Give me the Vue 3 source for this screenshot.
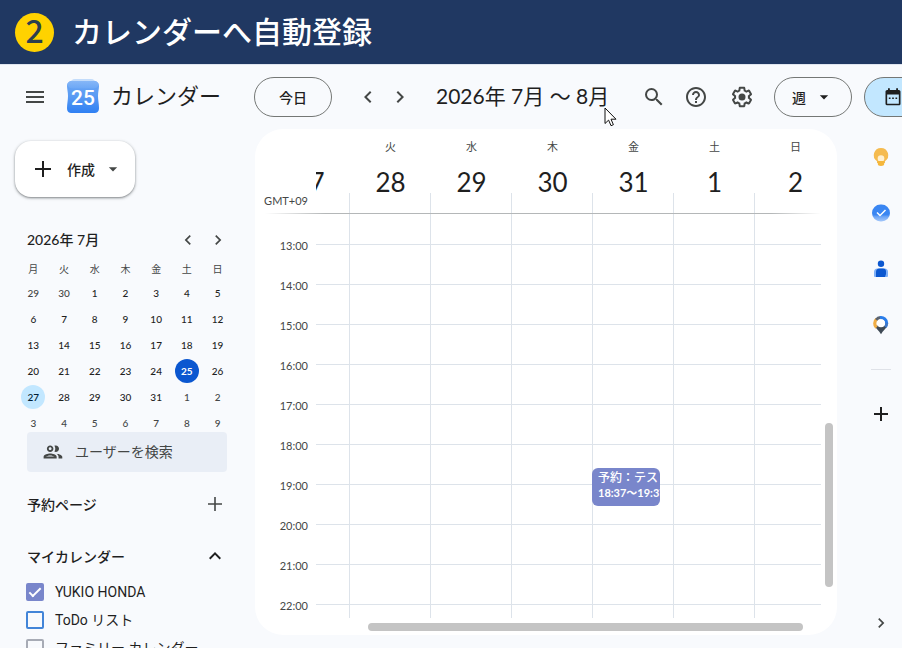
<script setup>
import { ref, computed } from 'vue'

const weekdays = ['月', '火', '水', '木', '金', '土', '日']
const days = [27, 28, 29, 30, 31, 1, 2].map((date, i) => ({ date, name: weekdays[i] }))
const hours = [13, 14, 15, 16, 17, 18, 19, 20, 21, 22]

const monthDates = [29, 30, ...Array.from({ length: 31 }, (_, i) => i + 1), 1, 2, 3, 4, 5, 6, 7, 8, 9]
const weeks = computed(() => {
  const cells = monthDates.map((date, i) => ({
    date,
    outside: i < 2 || i > 32,
    today: i === 26,
    selected: i === 28,
  }))
  return Array.from({ length: 6 }, (_, w) => cells.slice(w * 7, w * 7 + 7))
})

const calendars = ref([
  { id: 'own', name: 'YUKIO HONDA', tone: 'violet', on: true },
  { id: 'todo', name: 'ToDo リスト', tone: 'blue', on: false },
  { id: 'family', name: 'ファミリー カレンダー', tone: 'grey', on: false },
])

const HOUR_HEIGHT = 40
const FIRST_LINE = 30
const events = [
  { day: 4, title: '予約：テスト', time: '18:37～19:37', start: 18 + 37 / 60, length: 57 / 60 },
]
const eventStyle = (e) => ({
  top: Math.floor(FIRST_LINE + (e.start - hours[0]) * HOUR_HEIGHT) + 'px',
  height: Math.round(e.length * HOUR_HEIGHT) + 'px',
})
const eventsOn = (day) => events.filter((e) => e.day === day)
const view = ref('週')
</script>

<template>
  <div class="page">
    <div class="banner">
      <span class="badge">2</span>
      <h1>カレンダーへ自動登録</h1>
    </div>

    <header class="topbar">
      <button class="icon-btn menu" aria-label="メインメニュー">
        <svg class="i24" viewBox="0 0 24 24"><path d="M3 18h18v-2H3v2zm0-5h18v-2H3v2zm0-7v2h18V6H3z" /></svg>
      </button>
      <svg class="logo" viewBox="0 0 32 34" aria-hidden="true">
        <defs>
          <linearGradient id="lg" x1="0" y1="0" x2="0" y2="1">
            <stop offset="0" stop-color="#6ba6f5" />
            <stop offset="0.45" stop-color="#5b9cf3" />
            <stop offset="1" stop-color="#2f80f3" />
          </linearGradient>
          <linearGradient id="lt" x1="0" y1="0" x2="0" y2="1">
            <stop offset="0" stop-color="#8fbcf8" />
            <stop offset="1" stop-color="#6ea9f6" />
          </linearGradient>
        </defs>
        <rect x="3" y="0" width="26" height="14" rx="5" fill="#c3dcfb" />
        <path d="M5 2h22c3 0 5 2 5 5 0 3-1 6-1 10s1 8 1 12-2 5-5 5H5c-3 0-5-1-5-5s1-8 1-12-1-7-1-10c0-3 2-5 5-5z" fill="url(#lg)" />
        <path d="M5 2h22c2.500 0 4.500 1.500 4.800 4-1.300 2.500-3.300 3.500-5.800 3.500H6C3.500 9.500 1.500 8.500.2 6 .5 3.500 2.500 2 5 2z" fill="url(#lt)" opacity=".75" />
        <text x="16" y="26" text-anchor="middle" class="logo-num">25</text>
      </svg>
      <span class="product">カレンダー</span>
      <button class="pill today">今日</button>
      <div class="pager">
        <button class="icon-btn" aria-label="前の週">
          <svg class="i24" viewBox="0 0 24 24"><path d="M15.410 7.410 14 6l-6 6 6 6 1.410-1.410L10.830 12z" /></svg>
        </button>
        <button class="icon-btn" aria-label="次の週">
          <svg class="i24" viewBox="0 0 24 24"><path d="M10 6 8.590 7.410 13.170 12l-4.580 4.590L10 18l6-6z" /></svg>
        </button>
      </div>
      <h2 class="range">2026年 7月 〜 8月</h2>
      <div class="tools">
        <button class="icon-btn" aria-label="検索">
          <svg class="i24" viewBox="0 0 24 24"><path d="M15.500 14h-.79l-.28-.27A6.471 6.471 0 0 0 16 9.500 6.500 6.500 0 1 0 9.500 16c1.610 0 3.090-.59 4.230-1.570l.27.28v.79l5 4.990L20.490 19l-4.990-5zm-6 0C7.010 14 5 11.990 5 9.500S7.010 5 9.500 5 14 7.010 14 9.500 11.990 14 9.500 14z" /></svg>
        </button>
        <button class="icon-btn" aria-label="ヘルプ">
          <svg class="i24" viewBox="0 0 24 24"><path d="M11 18h2v-2h-2v2zm1-16C6.480 2 2 6.480 2 12s4.480 10 10 10 10-4.480 10-10S17.520 2 12 2zm0 18c-4.410 0-8-3.590-8-8s3.590-8 8-8 8 3.590 8 8-3.590 8-8 8zm0-14c-2.210 0-4 1.790-4 4h2c0-1.100.9-2 2-2s2 .9 2 2c0 2-3 1.750-3 5h2c0-2.250 3-2.500 3-5 0-2.210-1.790-4-4-4z" /></svg>
        </button>
        <button class="icon-btn gear" aria-label="設定">
          <svg class="i24" viewBox="0 0 24 24"><path d="M13.850 22.250h-3.700c-.74 0-1.360-.54-1.450-1.270l-.27-1.890c-.27-.14-.53-.29-.79-.46l-1.800.72c-.7.26-1.470-.03-1.810-.65L2.200 15.530c-.35-.66-.2-1.440.36-1.880l1.530-1.190c-.01-.15-.02-.3-.02-.46 0-.15.01-.31.02-.46l-1.520-1.190c-.59-.45-.74-1.260-.37-1.880l1.850-3.190c.34-.62 1.110-.9 1.790-.63l1.810.73c.26-.17.52-.32.78-.46l.27-1.910c.09-.7.71-1.250 1.440-1.250h3.700c.74 0 1.360.54 1.450 1.270l.27 1.890c.27.14.53.29.79.46l1.800-.72c.71-.26 1.480.03 1.820.65l1.840 3.180c.36.66.2 1.440-.36 1.880l-1.520 1.190c.01.15.02.3.02.46s-.01.31-.02.46l1.520 1.190c.56.45.72 1.230.37 1.860l-1.860 3.220c-.34.62-1.110.9-1.800.63l-1.800-.72c-.26.17-.52.32-.78.46l-.27 1.910c-.1.680-.72 1.220-1.460 1.220zm-3.230-2h2.760l.37-2.550.53-.22c.44-.18.88-.44 1.340-.78l.45-.34 2.380.96 1.380-2.400-2.030-1.580.07-.56c.03-.26.06-.51.06-.78s-.03-.53-.06-.78l-.07-.56 2.030-1.580-1.390-2.400-2.390.96-.45-.35c-.42-.32-.87-.58-1.330-.77l-.52-.22-.37-2.550h-2.760l-.37 2.550-.53.210c-.44.19-.88.44-1.340.79l-.45.33-2.380-.95-1.390 2.390 2.030 1.580-.07.56a7 7 0 0 0-.06.79c0 .26.02.53.06.78l.07.56-2.030 1.580 1.380 2.400 2.390-.96.45.35c.43.33.86.58 1.330.77l.53.22z" /><circle cx="12" cy="12" r="3.500" /></svg>
        </button>
      </div>
      <button class="pill view"><span>{{ view }}</span><svg class="i20" viewBox="0 0 24 24"><path d="m7 10 5 5 5-5z" /></svg></button>
      <button class="pill mode" aria-label="カレンダーに切り替え">
        <svg class="i20" viewBox="0 0 24 24"><path d="M19 3.500h-1V1.500h-2.200v2H8.200v-2H6v2H5c-1.110 0-2 .9-2 2v14.500a2 2 0 0 0 2 2h14c1.100 0 2-.9 2-2V5.500c0-1.100-.9-2-2-2zm0 16.500H5V9h14zM7 12.500h2v2H7zm4 0h2v2h-2zm4 0h2v2h-2z" /></svg>
      </button>
    </header>

    <div class="body">
      <aside class="sidebar">
        <button class="create">
          <svg class="i24" viewBox="0 0 24 24"><path d="M11 4h2v7h7v2h-7v7h-2v-7H4v-2h7z" /></svg>
          <span>作成</span>
          <svg class="i20 dim" viewBox="0 0 24 24"><path d="m7 10 5 5 5-5z" /></svg>
        </button>

        <div class="mini-head">
          <h3>2026年 7月</h3>
          <button class="icon-btn small" aria-label="前の月">
            <svg class="i20" viewBox="0 0 24 24"><path d="M15.410 7.410 14 6l-6 6 6 6 1.410-1.410L10.830 12z" /></svg>
          </button>
          <button class="icon-btn small" aria-label="次の月">
            <svg class="i20" viewBox="0 0 24 24"><path d="M10 6 8.590 7.410 13.170 12l-4.580 4.590L10 18l6-6z" /></svg>
          </button>
        </div>
        <table class="mini">
          <thead>
            <tr><th v-for="d in weekdays" :key="d" scope="col">{{ d }}</th></tr>
          </thead>
          <tbody>
            <tr v-for="(week, w) in weeks" :key="w">
              <td v-for="(c, i) in week" :key="i">
                <button class="date" :class="{ outside: c.outside, today: c.today, selected: c.selected }">{{ c.date }}</button>
              </td>
            </tr>
          </tbody>
        </table>

        <label class="people">
          <svg class="i20" viewBox="0 0 24 24"><path d="M9 12c1.930 0 3.500-1.570 3.500-3.500S10.930 5 9 5 5.500 6.570 5.500 8.500 7.070 12 9 12zm0-5c.83 0 1.500.67 1.500 1.500S9.830 10 9 10s-1.500-.67-1.500-1.500S8.170 7 9 7zm0 6.750c-2.340 0-7 1.170-7 3.500V19h14v-1.750c0-2.330-4.660-3.500-7-3.500zM4.340 17c.84-.58 2.870-1.250 4.660-1.250s3.820.67 4.660 1.250H4.340zm11.700-3.190c1.160.84 1.960 1.960 1.960 3.440V19h4v-1.750c0-2.020-3.500-3.170-5.960-3.440zM15 12c1.930 0 3.500-1.570 3.500-3.500S16.930 5 15 5c-.54 0-1.040.13-1.500.35.63.89 1 1.980 1 3.150s-.37 2.260-1 3.150c.46.22.96.35 1.500.35z" transform="translate(-1.500 -1.500) scale(1.120)" /></svg>
          <input type="text" placeholder="ユーザーを検索" aria-label="ユーザーを検索" />
        </label>

        <div class="section">
          <h3>予約ページ</h3>
          <button class="icon-btn small" aria-label="予約ページを追加">
            <svg class="i24" viewBox="0 0 24 24"><path d="M11.200 5h1.600v6.200H19v1.600h-6.200V19h-1.600v-6.200H5v-1.600h6.200z" /></svg>
          </button>
        </div>
        <div class="section">
          <h3>マイカレンダー</h3>
          <button class="icon-btn small dark" aria-label="折りたたむ">
            <svg class="i24" viewBox="0 0 24 24"><path d="m12 8-6 6 1.410 1.410L12 10.830l4.590 4.580L18 14z" /></svg>
          </button>
        </div>
        <ul class="calendars">
          <li v-for="c in calendars" :key="c.id">
            <input :id="c.id" v-model="c.on" type="checkbox" :class="c.tone" />
            <label :for="c.id">{{ c.name }}</label>
          </li>
        </ul>
      </aside>

      <main class="card">
        <div class="head">
          <div class="zone">GMT+09</div>
          <div class="clip">
            <div class="cols">
              <div v-for="d in days" :key="d.date" class="day">
                <span class="name">{{ d.name }}</span>
                <span class="num">{{ d.date }}</span>
              </div>
            </div>
          </div>
        </div>
        <div class="rule"></div>
        <div class="grid">
          <div class="hours">
            <span v-for="h in hours" :key="h">{{ h }}:00</span>
          </div>
          <div class="clip lines">
            <div class="cols">
              <div v-for="(d, i) in days" :key="d.date" class="slot">
                <button v-for="e in eventsOn(i)" :key="e.title" class="event" :style="eventStyle(e)">
                  <span>{{ e.title }}</span>
                  <span class="time">{{ e.time }}</span>
                </button>
              </div>
            </div>
          </div>
          <div class="vbar"><i></i></div>
        </div>
        <div class="hbar"><i></i></div>
      </main>

      <nav class="rail" aria-label="サイドパネル">
        <button aria-label="Keep">
          <svg class="i20" viewBox="0 0 20 20"><path d="M10 1a7.200 7.200 0 0 0-4 13.200V16h8v-1.800A7.200 7.200 0 0 0 10 1z" fill="#f5bb4f" /><circle cx="10" cy="11.500" r="3.300" fill="#fff0cf" /><path d="M6.800 14h6.400v3c0 1.200-1 2-3.200 2s-3.200-.8-3.200-2z" fill="#f5b73c" /></svg>
        </button>
        <button aria-label="ToDo リスト">
          <svg class="i20" viewBox="0 0 20 20"><defs><linearGradient id="tk" x1="0" y1="0" x2="0" y2="1"><stop offset=".6" stop-color="#3a86f2" /><stop offset=".72" stop-color="#6ea6f6" /><stop offset="1" stop-color="#a5c8fa" /></linearGradient></defs><rect x="1" y="1.500" width="18" height="17" rx="8.500" fill="url(#tk)" /><path d="m6 9.500 3 3 5.500-5.500" fill="none" stroke="#fff" stroke-width="1.500" /></svg>
        </button>
        <button aria-label="連絡先">
          <svg class="i20" viewBox="0 0 20 20"><circle cx="10" cy="4.800" r="3.200" fill="#0b57d0" /><rect x="3" y="9.500" width="14" height="8.500" rx="3.500" fill="#7fb0f7" /><path d="M3 14h14v3a1 1 0 0 1-1 1H4a1 1 0 0 1-1-1z" fill="#7fb0f7" /><path d="M5 18v-5a3.500 3.500 0 0 1 3.500-3.500h3.500a3 3 0 0 1 3 3V15l-1 3z" fill="#0b57d0" /></svg>
        </button>
        <button aria-label="マップ">
          <svg class="i20" viewBox="0 0 20 20"><path d="M3.500 10.500C5 14 8 15.500 10 19.200c2-3.700 5-5.200 6.500-8.700z" fill="#3f4a55" /><path d="M5.500 12.500A5.700 5.700 0 0 1 5.800 4" fill="none" stroke="#f0ad45" stroke-width="3.200" /><path d="M5.200 4.800A5.700 5.700 0 0 1 9.500 2.600" fill="none" stroke="#5c6470" stroke-width="3" /><path d="M9 2.700a5.700 5.700 0 0 1 6.700 5.800" fill="none" stroke="#2b7de9" stroke-width="3.200" /><path d="M15.700 8a5.700 5.700 0 0 1-1.500 4" fill="none" stroke="#3f78c8" stroke-width="3" /><circle cx="10" cy="8.200" r="4" fill="#fff" /></svg>
        </button>
        <hr />
        <button aria-label="アドオンを取得" class="add">
          <svg class="i24" viewBox="0 0 24 24"><path d="M11 5h2v6h6v2h-6v6h-2v-6H5v-2h6z" /></svg>
        </button>
        <button class="collapse" aria-label="サイドパネルを非表示">
          <svg class="i20" viewBox="0 0 24 24"><path d="M10 6 8.590 7.410 13.170 12l-4.580 4.590L10 18l6-6z" /></svg>
        </button>
      </nav>
    </div>

    <svg class="cursor" viewBox="0 0 13 20" aria-hidden="true"><path d="M1 1v15.500l3.600-3.400 2.400 5.600 2.400-1-2.400-5.500h5z" fill="#fff" stroke="#111" stroke-width="1" /></svg>
  </div>
</template>

<style>
body {
  overflow: hidden;
}
</style>

<style scoped>
.page {
  --ink: #1f1f1f;
  --dim: #444746;
  --line: #dde3ea;
  position: relative;
  display: flex;
  flex-direction: column;
  height: 100vh;
  overflow: hidden;
  background: #f8fafd;
  color: var(--ink);
  font-family: Lato, "Noto Sans CJK JP", sans-serif;
}
.page *,
.page *::before {
  box-sizing: border-box;
}
h1, h2, h3, ul {
  margin: 0;
  padding: 0;
  font-weight: 400;
}
button {
  margin: 0;
  padding: 0;
  border: 0;
  background: none;
  color: inherit;
  font: inherit;
}
svg {
  display: block;
  flex: none;
  fill: currentColor;
}
.i24 { width: 24px; height: 24px; }
.i20 { width: 20px; height: 20px; }

.banner {
  display: flex;
  align-items: center;
  flex: none;
  gap: 18px;
  height: 65px;
  padding-left: 15px;
  border-bottom: 1px solid #dfe5ef;
  background: #203862;
  color: #fff;
}
.badge {
  display: flex;
  justify-content: center;
  width: 39px;
  height: 39px;
  border-radius: 50%;
  background: #ffd200;
  color: #2b3f4e;
  font: 500 32px/32px "Noto Sans CJK JP", sans-serif;
}
h1 {
  padding-bottom: 4px;
  font: 500 30px/44px "Noto Sans CJK JP", sans-serif;
  white-space: nowrap;
}

.topbar {
  display: flex;
  align-items: center;
  flex: none;
  height: 64px;
  padding-left: 19px;
  white-space: nowrap;
}
.icon-btn {
  display: grid;
  place-items: center;
  flex: none;
  width: 32px;
  height: 32px;
  color: var(--dim);
}
.icon-btn.small { width: 30px; }
.icon-btn.dark { color: var(--ink); }
.logo {
  width: 32px;
  height: 34px;
  margin: 0 12px 2px 16px;
}
.logo-num {
  fill: #fff;
  font: 500 21px Roboto, sans-serif;
}
.product {
  width: 143px;
  padding-bottom: 2px;
  font-size: 22px;
  line-height: 32px;
}
.pill {
  display: flex;
  align-items: center;
  justify-content: center;
  flex: none;
  width: 78px;
  height: 40px;
  border: 1px solid #747775;
  border-radius: 20px;
  font-size: 14px;
  font-weight: 500;
}
.pager {
  display: flex;
  margin: 0 20px;
}
.range {
  flex: 1;
  padding-bottom: 2px;
  font-size: 21px;
  line-height: 32px;
}
.tools {
  display: flex;
  gap: 12px;
  margin-right: 16px;
}
.tools .icon-btn:first-child { margin-right: -2px; }
.tools .gear { margin-left: 2px; }
.view {
  gap: 8px;
  margin-right: 12px;
}
.mode {
  width: 58px;
  margin-right: -20px;
  background: #c2e7ff;
}

.body {
  display: flex;
  flex: 1;
  min-height: 0;
}
.sidebar {
  flex: none;
  width: 255px;
  padding: 12px 22px 0 15px;
  overflow: hidden;
}
.create {
  display: flex;
  align-items: center;
  gap: 12px;
  height: 56px;
  padding: 0 12px 0 16px;
  border-radius: 16px;
  background: #fff;
  box-shadow: 0 1px 2px rgba(60, 64, 67, 0.5), 0 1px 3px 1px rgba(60, 64, 67, 0.15);
  font-size: 14px;
  font-weight: 500;
}
.create .dim { color: var(--dim); margin-left: -4px; }
.mini-head {
  display: flex;
  align-items: center;
  height: 32px;
  margin-top: 27px;
  padding-left: 12px;
}
.mini-head h3 {
  flex: 1;
  padding-bottom: 2px;
  font-size: 14px;
  font-weight: 500;
}
.mini {
  width: 215px;
  margin-left: 3px;
  border-collapse: collapse;
  table-layout: fixed;
  font-size: 10px;
  text-align: center;
}
.mini th {
  height: 24px;
  padding: 0;
  color: var(--dim);
  font-weight: 400;
}
.mini td {
  height: 26px;
  padding: 0;
}
.date {
  display: block;
  width: 24px;
  height: 24px;
  margin: 0 auto;
  border-radius: 50%;
  font-weight: 500;
  line-height: 24px;
}
.date.outside { color: var(--dim); }
.date.today { background: #0b57d0; color: #fff; font-weight: 700; }
.date.selected { background: #c2e7ff; color: #001d35; }
.people {
  position: relative;
  display: flex;
  align-items: center;
  gap: 12px;
  width: 200px;
  height: 40px;
  margin: -4px 0 16px 12px;
  padding-left: 16px;
  border-radius: 4px;
  background: #e9eef6;
  color: var(--dim);
}
.people input {
  width: 140px;
  padding: 0;
  border: 0;
  outline: 0;
  background: none;
  font: 14px/20px Roboto, "Noto Sans CJK JP", sans-serif;
}
.people input::placeholder { color: var(--dim); opacity: 1; }
.section {
  display: flex;
  align-items: center;
  height: 32px;
  margin-bottom: 20px;
  padding: 0 3px 0 12px;
}
.section h3 {
  flex: 1;
  font-size: 14px;
  font-weight: 500;
}
.calendars {
  margin-top: -14px;
  padding-left: 11px;
  list-style: none;
}
.calendars li {
  display: flex;
  align-items: center;
  gap: 11px;
  height: 28px;
  font: 14px/20px Roboto, "Noto Sans CJK JP", sans-serif;
  white-space: nowrap;
}
.calendars input {
  appearance: none;
  display: grid;
  place-items: center;
  flex: none;
  width: 18px;
  height: 18px;
  margin: 0;
  border: 2px solid var(--tone);
  border-radius: 2px;
}
.calendars .violet { --tone: #7986cb; }
.calendars .blue { --tone: #4285d8; }
.calendars .grey { --tone: #a7abb5; }
.calendars input:checked { background: var(--tone); }
.calendars input:checked::before {
  content: "";
  width: 12px;
  height: 6px;
  margin-top: -3px;
  border: solid #fff;
  border-width: 0 0 2px 2px;
  transform: rotate(-45deg);
}

.card {
  display: flex;
  flex-direction: column;
  flex: 1;
  min-width: 0;
  margin-bottom: 13px;
  border-radius: 28px;
  background: #fff;
  overflow: hidden;
}
.head {
  display: flex;
  flex: none;
  height: 84px;
  padding-right: 16px;
}
.zone {
  flex: none;
  width: 61px;
  padding: 64px 8px 0 0;
  color: var(--dim);
  font-size: 11px;
  line-height: 16px;
  text-align: right;
}
.clip {
  flex: 1;
  min-width: 0;
  overflow: hidden;
}
.cols {
  display: grid;
  grid-template-columns: repeat(7, 81px);
  height: 100%;
  margin-left: -48px;
}
.day {
  display: flex;
  flex-direction: column;
  align-items: center;
  padding: 10px 0 0 2px;
  background: linear-gradient(var(--line), var(--line)) left bottom / 1px 20px no-repeat;
}
.name {
  color: var(--dim);
  font-size: 11px;
  line-height: 16px;
}
.num {
  margin-top: 7px;
  font-size: 26px;
  line-height: 40px;
}
.rule {
  flex: none;
  height: 1px;
  margin: 0 16px 0 10px;
  background: linear-gradient(90deg, transparent, #b4b7b8 60px, #b4b7b8 calc(100% - 50px), transparent);
}
.grid {
  display: flex;
  flex: 1;
  min-height: 0;
}
.hours {
  flex: none;
  width: 61px;
  padding: 12px 8px 0 0;
  overflow: hidden;
  color: var(--dim);
  font-size: 11px;
  text-align: right;
}
.hours span {
  display: block;
  height: 40px;
  line-height: 40px;
}
.lines {
  background: repeating-linear-gradient(transparent 0 39px, var(--line) 39px 40px) 0 -9px / 100% 480px;
}
.slot {
  position: relative;
  border-left: 1px solid var(--line);
}
.event {
  position: absolute;
  left: -1px;
  width: 68px;
  padding: 2px 0 0 6px;
  border-radius: 6px;
  background: #7986cb;
  color: #fff;
  font-size: 12px;
  font-weight: 500;
  line-height: 15px;
  text-align: left;
  white-space: nowrap;
  overflow: hidden;
  display: flex;
  flex-direction: column;
}
.time { font-size: 11px; font-weight: 700; }
.vbar,
.hbar {
  display: flex;
  flex: none;
}
.vbar {
  flex-direction: column;
  align-items: center;
  width: 16px;
}
.hbar {
  align-items: center;
  height: 17px;
  padding: 1px 16px 0 61px;
}
.vbar::before { content: ""; flex: 209; }
.vbar::after { content: ""; flex: 31; }
.hbar::before { content: ""; flex: 52; }
.hbar::after { content: ""; flex: 18; }
.vbar i,
.hbar i {
  border-radius: 4px;
  background: #c4c4c4;
}
.vbar i { flex: 164; width: 8px; }
.hbar i { flex: 435; height: 8px; }

.rail {
  display: flex;
  flex-direction: column;
  align-items: center;
  flex: none;
  width: 65px;
  padding: 8px 0 5px 23px;
}
.rail button {
  display: grid;
  place-items: center;
  flex: none;
  width: 40px;
  height: 40px;
  margin-bottom: 16px;
}
.rail hr {
  width: 20px;
  height: 1px;
  margin: 8px 0 24px;
  border: 0;
  background: #dfe2e8;
}
.rail .collapse {
  margin: auto 0 0;
  color: var(--dim);
}

.cursor {
  position: absolute;
  left: 604px;
  top: 107px;
  width: 13px;
  height: 20px;
}
</style>
